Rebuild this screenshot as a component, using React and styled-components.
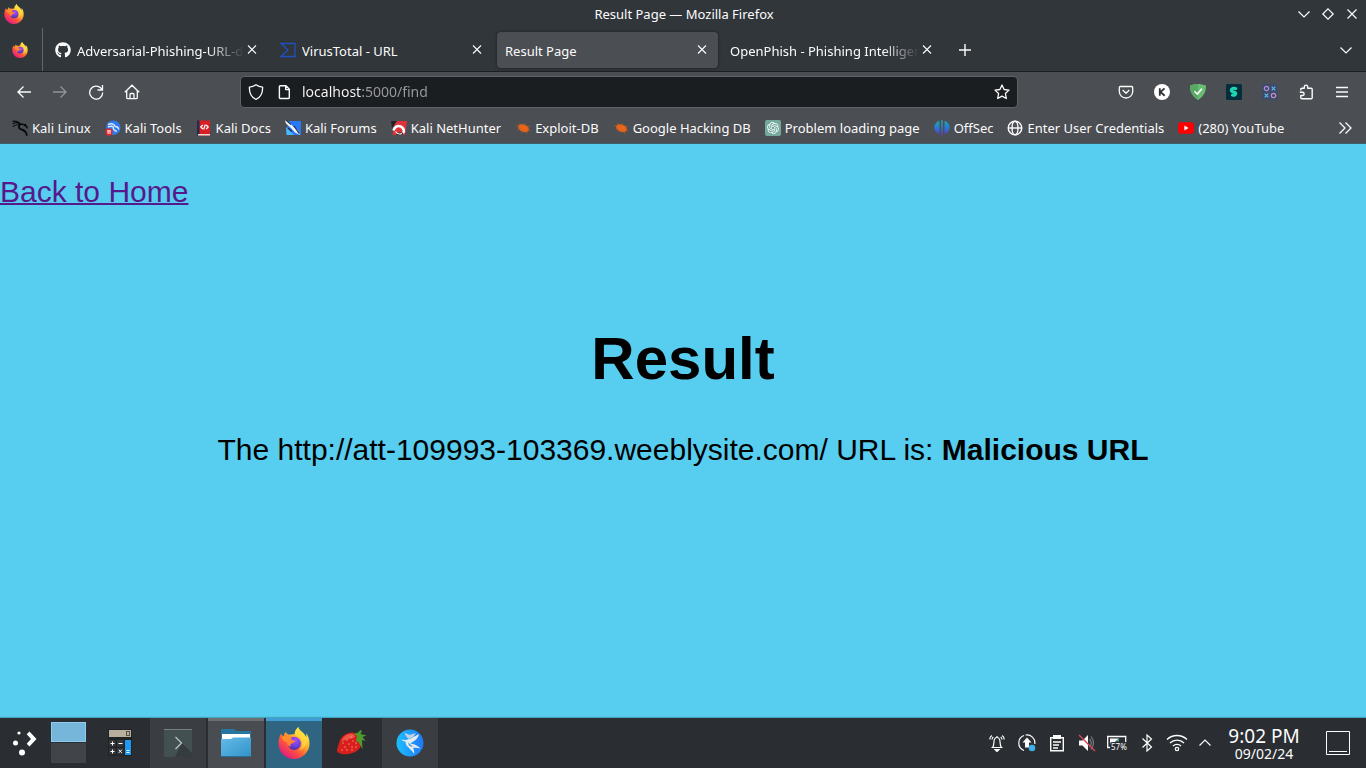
import React, { useId } from "react";
import styled, { createGlobalStyle } from "styled-components";
import { FaGithub } from "react-icons/fa";
import { SiOpenai } from "react-icons/si";

const GlobalStyle = createGlobalStyle`
  * { box-sizing: border-box; }
  body { margin: 0; font-family: "Noto Sans", "Open Sans", sans-serif; font-size: 13px; color: #fcfcfc; }
  button { font: inherit; color: inherit; background: none; border: 0; padding: 0; margin: 0; }
  svg { display: block; flex: none; }
`;

/* ---------- layout ---------- */

const Desktop = styled.div`
  min-height: 100vh;
  display: flex;
  flex-direction: column;
  background: #57ceef;
`;

const TitleBar = styled.header`
  display: flex;
  align-items: center;
  height: 28px;
  padding: 0 2px 0 4px;
  background: #31363b;
`;

const TitleSide = styled.div`
  flex: 1;
  display: flex;
  justify-content: ${(p) => (p.$end ? "flex-end" : "flex-start")};
`;

const WindowButton = styled.button`
  width: 24px;
  height: 28px;
  display: grid;
  place-items: center;
`;

const TabStrip = styled.nav`
  display: flex;
  height: 44px;
  padding-right: 2px;
  background: #31363b;
  border-bottom: 1px solid #1c1f22;
`;

const PinnedTab = styled.button`
  width: 43px;
  padding-right: 2px;
  display: grid;
  place-items: center;
  border-right: 1px solid #62666a;
`;

const Tabs = styled.div`
  flex: 1;
  display: flex;
  align-items: center;
  gap: 4px;
  padding-left: 4px;
`;

const Tab = styled.div`
  flex: 0 1 221px;
  min-width: 0;
  height: 36px;
  display: flex;
  align-items: center;
  padding: 0 8px;
  border-radius: 4px;
  background: ${(p) => (p.$active ? "#4b4e53" : "transparent")};
  box-shadow: ${(p) => (p.$active ? "0 0 3px rgba(0, 0, 0, 0.5)" : "none")};
`;

const TabLabel = styled.button`
  flex: 1;
  min-width: 0;
  display: flex;
  align-items: center;
  gap: 6px;
`;

const TabText = styled.span`
  flex: 1;
  overflow: hidden;
  padding-top: 2px;
  text-align: left;
  white-space: nowrap;
  mask-image: ${(p) => (p.$fade ? "linear-gradient(to left, transparent, #000 36px)" : "none")};
`;

const TabClose = styled.button`
  width: 16px;
  height: 20px;
  display: grid;
  place-items: center;
`;

const StripButton = styled.button`
  width: 36px;
  height: 44px;
  display: grid;
  place-items: center;
`;

const Toolbar = styled.div`
  display: flex;
  align-items: center;
  height: 40px;
  padding: 0 6px;
  background: #4b4e53;
`;

const ToolButton = styled.button`
  width: 36px;
  height: 32px;
  display: grid;
  place-items: center;
  opacity: ${(p) => (p.disabled ? 0.4 : 1)};
  color: #fcfcfc;
`;

const Spring = styled.div`
  flex: 90;
`;

const AddressBar = styled.form`
  flex: 762;
  display: flex;
  align-items: center;
  height: 32px;
  padding: 0 7px;
  border: 1px solid #5e6266;
  border-radius: 4px;
  background: #1b1e20;
`;

const AddressInput = styled.input`
  flex: 1;
  min-width: 0;
  margin: 0 8px 0 10px;
  padding: 0;
  border: 0;
  outline: 0;
  font: 14px/24px "Noto Sans", sans-serif;
  background: linear-gradient(to right, #fcfcfc 60px, #9a9b9d 60px);
  background-clip: text;
  -webkit-text-fill-color: transparent;
`;

const AddressButton = styled.button`
  width: 16px;
  height: 24px;
  display: grid;
  place-items: center;
  & + & { margin-left: 12px; }
`;

const Bookmarks = styled.nav`
  display: flex;
  align-items: center;
  height: 32px;
  padding: 0 13px 0 12px;
  gap: 14px;
  background: #4b4e53;
  border-bottom: 1px solid #3d5f6b;
`;

const Bookmark = styled.a`
  display: flex;
  align-items: center;
  gap: 4px;
  color: #fcfcfc;
  text-decoration: none;
  white-space: nowrap;
`;

const MoreBookmarks = styled.button`
  margin-left: auto;
`;

const Page = styled.main`
  flex: 1;
  padding-top: 31px;
  font: 30px/34px "Liberation Sans", Arial, sans-serif;
  color: #000;
`;

const BackLink = styled.a`
  color: #551a8b;
  text-decoration-thickness: 2px;
`;

const Result = styled.section`
  padding-top: 116px;
  text-align: center;
`;

const ResultTitle = styled.h1`
  margin: 0 0 40px;
  font-size: 60px;
  line-height: 68px;
`;

const ResultText = styled.p`
  margin: 0;
`;

const TaskBar = styled.footer`
  display: flex;
  height: 50px;
  background: #2a2e32;
  box-shadow: 0 -1px 1px rgba(0, 0, 0, 0.2);
`;

const Launcher = styled.button`
  width: 48px;
  display: grid;
  place-items: center;
`;

const Pager = styled.div`
  display: flex;
  flex-direction: column;
  gap: 1px;
  width: 41px;
  padding: 4px 3px;
`;

const PagerDesk = styled.button`
  height: 20px;
  background: ${(p) => (p.$active ? "#76b6da" : "#414448")};
  border: ${(p) => (p.$active ? "1px solid #8ecdf0" : "0")};
`;

const Tasks = styled.div`
  display: flex;
  padding-left: 1px;
`;

const taskLooks = {
  plain: ["transparent", "transparent"],
  pinned: ["#3a3d41", "#3a3d41"],
  open: ["#494c50", "#6c6f72"],
  active: ["#306582", "#3d9fd6"],
};

const Task = styled.button`
  width: ${(p) => (p.$look === "plain" ? 60 : 56)}px;
  display: grid;
  place-items: center;
  background: ${(p) => taskLooks[p.$look][0]};
  box-shadow: inset 0 3px ${(p) => taskLooks[p.$look][1]};
  margin-right: ${(p) => (p.$gap ? 2 : 0)}px;
`;

const Tray = styled.div`
  display: flex;
  margin-left: auto;
`;

const TrayButton = styled.button`
  width: 30px;
  display: grid;
  place-items: center;
`;

const TrayToggle = styled(TrayButton)`
  width: 26px;
`;

const Clock = styled.button`
  width: 92px;
  padding-top: 2px;
  display: flex;
  flex-direction: column;
  align-items: center;
  justify-content: center;
`;

const Time = styled.time`
  font-size: 19px;
  line-height: 20px;
`;

const DateText = styled.time`
  font-size: 14px;
  line-height: 16px;
`;

const ShowDesktop = styled.button`
  width: 56px;
  display: grid;
  place-items: center;
`;

/* ---------- icons ---------- */

const Line = ({ size = 16, box = 16, w = 1, children }) => (
  <svg width={size} height={size} viewBox={`0 0 ${box} ${box}`} fill="none" stroke="currentColor" strokeWidth={w}>
    {children}
  </svg>
);

const Cross = () => <Line w={1.1}><path d="M4 3.500l8 8M12 3.500l-8 8" /></Line>;
const Chevron = ({ up }) => <Line w={1.2}><path d={up ? "M2.500 10.500L8 5l5.500 5.500" : "M2.500 5.500L8 11l5.500-5.500"} /></Line>;

const Firefox = ({ size }) => {
  const id = useId().replace(/[^a-zA-Z0-9]/g, "");
  return (
    <svg width={size} height={size} viewBox="0 0 32 33">
      <defs>
        <linearGradient id={`${id}a`} x1=".85" y1=".1" x2=".2" y2=".95">
          <stop offset="0" stopColor="#fff44f" />
          <stop offset=".35" stopColor="#ffb02e" />
          <stop offset=".62" stopColor="#ff5a36" />
          <stop offset="1" stopColor="#e31587" />
        </linearGradient>
        <radialGradient id={`${id}b`} cx=".6" cy=".25" r=".8">
          <stop offset="0" stopColor="#a84dfa" />
          <stop offset=".5" stopColor="#7542e5" />
          <stop offset="1" stopColor="#4b2aa3" />
        </radialGradient>
        <linearGradient id={`${id}c`} x1="0" y1="0" x2="1" y2="1">
          <stop offset="0" stopColor="#ff9a26" />
          <stop offset="1" stopColor="#ff7139" />
        </linearGradient>
      </defs>
      <path d="M20.500 0c-2.800 2.500-4 5-3.800 7.300l-6 .7C9.200 7.300 8 6.300 7.300 5.200 6 6.300 5.600 8 5.500 9.300 4.200 9 3 8.200 2.500 7 .9 9.800 0 13.500 0 17 0 25.700 7.200 33 16 33s16-7.300 16-16c0-4.500-1.600-8.500-3.600-10.800.5 1.700.5 3 .2 4.300C26.500 5 21.500 4.500 20.500 0z" fill={`url(#${id}a)`} />
      <circle cx="16.300" cy="16.800" r="6.800" fill={`url(#${id}b)`} />
      <path d="M3.500 11c2-1.500 4.600-1.700 6.500-.8 1.500-1 3.400-1.200 5-.9-1.400.8-2.100 1.900-2 3.100.6 1.200 2.300 1.600 4.400 1.800-.2 1.700-2.200 2.500-4.300 3.100-1.200.7-1 2.300-.1 3.400-3.200-.5-4.600-2.900-4.100-5.200-2 .2-3.900-1.600-5.400-4.500z" fill={`url(#${id}c)`} />
      <path d="M20.500 0c-2.800 2.500-4 5.500-3.500 8.500 4.500.5 7.500 4 7.500 8.500 0 3-1.500 5.600-4 7.200 5-.8 8.500-5 8.500-10 0-6-7.500-8-8.500-14.200z" fill="#ffdf3d" opacity=".6" />
    </svg>
  );
};

const VirusTotal = () => (
  <Line w={1.3}><path d="M1 1.500h14v13H1l7-6.500z" stroke="#1f4fc0" /></Line>
);

const Shield = () => <Line w={1.3}><path d="M8 .8c2.200 1.700 4.300 2.200 6.600 2.300.2 5.700-1.400 9.900-6.600 12.200C2.800 13 1.200 8.800 1.400 3.100 3.700 3 5.800 2.500 8 .8z" strokeLinejoin="round" /></Line>;
const PageIcon = () => <Line w={1.4}><path d="M4.300 1.700H10l3.300 3.500v8.600q0 .7-.7.7H4.300q-.9 0-.9-.8V2.500q0-.8.9-.8zM9.700 2v3.600h3.500" strokeLinejoin="round" /></Line>;
const Star = () => <Line w={1.3}><path d="M8 1l2.100 4.500 4.900.6-3.600 3.400.9 5L8 12.100l-4.300 2.400.9-5L1 6.100l4.900-.6z" strokeLinejoin="round" /></Line>;
const Back = () => <Line w={1.3}><path d="M15 8H1.500M7.500 2.500L2 8l5.500 5.500" /></Line>;
const Forward = () => <Line w={1.3}><path d="M1 8h13.500M8.500 2.500L14 8l-5.500 5.500" /></Line>;
const Reload = () => <Line w={1.3}><path d="M14.700 8.500A6.500 6.500 0 1 1 12.800 4L14.200 5.500M14.500 1v5h-5" /></Line>;
const Home = () => <Line w={1.3}><path d="M.8 8.200L8 1.200l7.200 7M2.700 6.700v7q0 1 1 1h8.600q1 0 1-1v-7M6 14.500v-4q0-1 1-1h2q1 0 1 1v4" /></Line>;
const Pocket = () => <Line w={1.3}><path d="M2.300 2.500h11.400q1 0 1 1v4a6.700 6.500 0 0 1-13.400 0v-4q0-1 1-1zM4.700 6L8 9.200 11.300 6" strokeLinejoin="round" /></Line>;
const Puzzle = () => <Line w={1.4}><path d="M2.800 6.500V5.200q0-1 1-1h2.500V3a1.700 1.900 0 0 1 3.400 0v1.200h3.500q1 0 1 1v8.500q0 1-1 1H3.800q-1 0-1-1v-2.200h1.700a1.600 1.600 0 0 0 0-3.200H1.800" strokeLinejoin="round" /></Line>;
const Menu = () => <Line w={1.3}><path d="M2 3.500h12M2 8h12M2 12.500h12" /></Line>;

const KBadge = () => (
  <svg width="16" height="16" viewBox="0 0 16 16">
    <circle cx="8" cy="8" r="8" fill="#fff" />
    <path d="M5.800 4.300v7.400M10.500 4.300L6.500 8l4.200 3.700" stroke="#303236" strokeWidth="1.800" fill="none" />
  </svg>
);
const AdGuard = () => (
  <svg width="16" height="16" viewBox="0 0 16 16">
    <path d="M8 0c2.500 0 5.600.5 8 1.600 0 3.800-.5 9.900-8 14.400C.5 11.500 0 5.400 0 1.600 2.400.5 5.500 0 8 0z" fill="#68bc71" />
    <path d="M8 0C5.500 0 2.400.5 0 1.600 0 5.400.5 11.500 8 16z" fill="#5aa867" />
    <path d="M4.500 7.300l2.800 2.800 4.600-5.300" stroke="#fff" strokeWidth="1.500" fill="none" />
  </svg>
);
const Surf = () => (
  <svg width="16" height="16" viewBox="0 0 16 16">
    <rect width="16" height="16" rx="1.500" fill="#062d3b" />
    <path d="M9.800 4.600C7.500 3.800 5.300 4.500 5.300 6.200c0 2.200 4.500 1.300 4.500 3.400 0 1.400-1.800 2-3.300 1.500" stroke="#1ed6b0" strokeWidth="3" strokeLinecap="round" fill="none" />
  </svg>
);
const OXGrid = () => (
  <svg width="16" height="16" viewBox="0 0 16 16" fill="none" strokeWidth="1.200">
    <rect width="16" height="16" rx="1" fill="#3d4b66" />
    <circle cx="4.500" cy="4.500" r="2.200" stroke="#b58be0" />
    <circle cx="11.500" cy="11.500" r="2.200" stroke="#c78bd0" />
    <path d="M9.700 2.700l3.600 3.600m0-3.600L9.700 6.300M2.700 9.700l3.600 3.600m0-3.600l-3.600 3.600" stroke="#5cb8ee" />
  </svg>
);

const KaliLinux = () => (
  <svg width="16" height="16" viewBox="0 0 16 16" fill="none" stroke="#08090a" strokeLinecap="round">
    <path d="M.8 1.200C4 .8 6.500 1.500 8.500 3.800M.8 3.500c3-1.200 5.500-.8 7.500.8M1.200 6.300c2.200-1.600 4.600-1.800 6.800-1.200" strokeWidth="1.100" />
    <path d="M8 4.200C6.200 6.500 6.800 8.700 9.500 9.500c3 .7 4.700 2 5.300 5.500" strokeWidth="1.800" />
    <path d="M8.500 4.300c2.500-.3 4.500.3 5.500 1.500l1.200 2M12.500 5.500l1-1" strokeWidth="1.500" />
  </svg>
);
const KaliTools = () => (
  <svg width="16" height="16" viewBox="0 0 16 16">
    <circle cx="8.300" cy="7.700" r="7.200" fill="#2f7cf0" />
    <path d="M3 4.500C6 3.300 9 4 10.500 6.500c1.800.2 3 1.300 3.300 3M3 7c2-1 4-1 5.500 0-.8 2 .5 3.300 3.300 4.500" stroke="#dbe9fb" strokeWidth="1.400" fill="none" />
    <circle cx="4" cy="12" r="3.700" fill="#d92b2f" />
    <path d="M2 10.800h4M3.200 11v3M5 11v3" stroke="#fff" strokeWidth=".9" />
  </svg>
);
const KaliDocs = () => (
  <svg width="16" height="16" viewBox="0 0 16 16">
    <path d="M2 .5h12v15H2z" fill="#d81f26" />
    <path d="M1 .5h2.500v15H1z" fill="#252b4a" />
    <path d="M2 14h12v1.500H2z" fill="#ecd6d8" />
    <path d="M6.800 5L4.800 7l2 2M10.200 5l2 2-2 2M9.300 4.500l-1.600 5" stroke="#fff" strokeWidth="1.200" fill="none" />
  </svg>
);
const KaliForums = () => (
  <svg width="16" height="16" viewBox="0 0 16 16">
    <path d="M3 1h13v14H1.500z" fill="#2a78f5" />
    <path d="M1 7l8 8H1.500z" fill="#49b7ff" />
    <path d="M0 .5L4 2l4.500 5 4 3L15 15l-5-2.500L6 8 1 3.500z" fill="#f3f6fa" />
    <path d="M1.500.5L6 4.500M9 6l5 7.500M3 8l4 3.500" stroke="#23303d" strokeWidth="1.100" />
  </svg>
);
const NetHunter = () => (
  <svg width="16" height="16" viewBox="0 0 16 16">
    <path d="M4 1h12l-2 14H1.500z" fill="#e0333a" />
    <path d="M0 1h6L1 8z" fill="#20242a" />
    <path d="M6.500 12.500h6l-1 2.500H5z" fill="#20242a" />
    <path d="M2.500 10.500C3.500 6.500 7 5 10 6.700c3 1.800 3.800 4.300 2 6.300" stroke="#fff" strokeWidth="2.600" fill="none" />
    <path d="M4.500 11.500c1.500 2.200 4 3 6.500 2" stroke="#fff" strokeWidth="1.200" fill="none" />
  </svg>
);
const Bug = () => (
  <svg width="16" height="16" viewBox="0 0 16 16">
    <ellipse cx="8.500" cy="8.200" rx="5.600" ry="3.600" transform="rotate(22 8.500 8.200)" fill="#e8651a" />
    <path d="M1 5.500l4 1M4 3l3 3M9 3l1 3M2.500 9.500L6 9M6 12.500L8 10M12 7l3-1M12.500 9.500l3 1.500M10.500 10l1.500 3.500" stroke="#b85c26" strokeWidth=".7" />
  </svg>
);
const AiBadge = styled.span`
  width: 16px;
  height: 16px;
  display: grid;
  place-items: center;
  border-radius: 2px;
  background: #74aa9c;
`;
const OffSec = () => (
  <svg width="16" height="16" viewBox="0 0 16 16">
    <defs>
      <linearGradient id="offsec" x1="0" y1="0" x2="0" y2="1">
        <stop offset="0" stopColor="#25a5a8" />
        <stop offset=".5" stopColor="#2878d8" />
        <stop offset="1" stopColor="#6534a5" />
      </linearGradient>
    </defs>
    <path d="M5.500.8v13.500C-1.500 12-1.500 3 5.500.8zM7.200.3h1.600v15.400H7.200zM10.500.8c7 2.200 7 11.200 0 13.500z" fill="url(#offsec)" />
  </svg>
);
const Globe = () => <Line w={1.4}><circle cx="8" cy="8" r="6.800" /><ellipse cx="8" cy="8" rx="3" ry="6.800" /><path d="M1.500 8h13" /></Line>;
const YouTube = () => (
  <svg width="16" height="16" viewBox="0 0 16 16">
    <rect y="2.300" width="16" height="11.400" rx="3" fill="#f00" />
    <path d="M6.400 5.600v4.800L10.500 8z" fill="#fff" />
  </svg>
);

const Kickoff = () => (
  <svg width="26" height="26" viewBox="1 0 26 26" fill="#fff">
    <circle cx="9" cy="3" r="1.600" /><circle cx="5.500" cy="13" r="2.500" /><circle cx="12" cy="22.500" r="3" />
    <path d="M19.500 1.500l7 7.500-7 7.500-2.800-2.700L21 9l-4.300-4.800z" />
  </svg>
);
const Calculator = () => (
  <svg width="24" height="28" viewBox="0 0 24 28">
    <rect width="24" height="27" fill="#202326" />
    <rect x="1" y="1" width="22" height="7" fill="#b8b09c" />
    <rect x="18.500" y="2.500" width="3" height="4" fill="none" stroke="#55524a" />
    <path d="M1 11h6.500v6.500H1zM9 11h6.500v6.500H9zM1 19h6.500v6.500H1zM9 19h6.500v6.500H9z" fill="#34373a" />
    <path d="M17 11h6v15h-6z" fill="#1d99f3" />
    <path d="M2.500 14.500h4M4.500 12.500v4M10.500 14.500h4M2.500 22.500h4M4.500 20.500v4M10.800 20.800l3 3m0-3l-3 3M18.500 21.500h3M18.500 23.500h3" stroke="#fff" />
  </svg>
);
const Terminal = () => (
  <svg width="28" height="28" viewBox="0 0 28 28">
    <rect width="28" height="28" fill="#435052" />
    <path d="M0 .5h28" stroke="#758080" />
    <path d="M18 14l10 10v4H11z" fill="#343c40" />
    <path d="M11.500 8l6 6-6 6" stroke="#b8c0c2" strokeWidth="1.300" fill="none" />
  </svg>
);
const Folder = () => (
  <svg width="30" height="28" viewBox="0 0 30 28">
    <defs>
      <linearGradient id="folder" x1="0" y1="0" x2="1" y2="1">
        <stop offset="0" stopColor="#64bce9" /><stop offset="1" stopColor="#3192c8" />
      </linearGradient>
    </defs>
    <path d="M0 0h13l2 2h15v12H0z" fill="#2577a0" />
    <path d="M1 5h28v8H1z" fill="#fff" />
    <path d="M0 10h10l2-1.500h18V28H0z" fill="url(#folder)" />
    <path d="M0 27.500h30" stroke="#276f95" />
  </svg>
);
const Strawberry = () => (
  <svg width="30" height="26" viewBox="0 0 30 26">
    <path d="M20 4C14 0 5 4 2.500 11.500c-2 7-3.500 9-1.500 11 5 3.500 17 1.500 21.500-4 3.500-4.500 2-11-2.500-14.500z" fill="#d81f1c" />
    <path d="M17 4.500C11 2 5.500 7 4.500 12c5-4 8.500-2 13.500-5z" fill="#ee5545" />
    <g fill="#f7a08c">
      {[[6, 13], [10, 10], [14, 7], [8, 17], [12, 14], [16, 11], [5, 20], [10, 20], [15, 17], [19, 13], [15, 20], [19, 17]].map(([x, y]) => (
        <circle key={`${x}-${y}`} cx={x} cy={y} r=".7" />
      ))}
    </g>
    <path d="M17 4l4-1.500L23.500 0l1.500 1-1.500 3 6 1.500-4 1.500 3 4-3.500-1 .5 9-4-7-2.500-1 1-5z" fill="#4f9b2c" />
  </svg>
);
const KaliDisc = () => (
  <svg width="28" height="28" viewBox="0 0 28 28">
    <defs>
      <linearGradient id="disc" x1="0" y1="0" x2="1" y2="0">
        <stop offset="0" stopColor="#1ac0ff" /><stop offset="1" stopColor="#2277f2" />
      </linearGradient>
    </defs>
    <circle cx="14" cy="14" r="13.500" fill="url(#disc)" />
    <path d="M8.500 3.500c2 1.500 3.500 2 5.500 2.200L20 4l-3 4-4.500 2C10.500 8 9 6 8.500 3.500z" fill="#c4d2df" />
    <path d="M5 10.500c4 .8 7.500.5 11-1.700L23 5c-.8 3.500-3 6.300-6.500 8l-2.500 1.500c4 .2 7.500 2 10.500 5-3-.8-5-1-7.500-.8 1 2 1.300 4 1.200 6.300C15.500 20.500 12 19 10 15.500c-.5-1-.5-1.800 0-2.700C8 12.500 6.300 11.800 5 10.500z" fill="#e4ebf1" />
    <path d="M12.500 13.500c1.500 2 3 3 5 3.800l-3 .2c-1.700-.8-2.500-2.200-2-4z" fill="#5b93c9" />
  </svg>
);

const Bell = () => <Line size={18} box={18} w={1.2}><path d="M3.500 13.500h11M4.700 13.300C6 11.500 5.700 9.500 6 7.500 6.200 5 7.400 3.500 9 3.500s2.800 1.500 3 4c.3 2 0 4 1.300 5.800M9 3.500V2M3.800 1.500c-1.300 1-2 2.500-2 4M5.300 2.800c-.8.8-1.200 1.700-1.300 2.700M14.200 1.500c1.300 1 2 2.500 2 4M12.700 2.800c.8.8 1.200 1.700 1.300 2.700" /><path d="M7 15.500h4l-2 2z" fill="currentColor" /></Line>;
const Update = () => <Line size={18} box={18} w={1.2}><path d="M6 16.500A8 8 0 0 1 6 1.500M7.500 1a8 8 0 0 1 9.300 9" /><path d="M9 3.500l4.500 5H11v5H7v-5H4.500z" fill="currentColor" stroke="none" /><circle cx="14" cy="14" r="3.300" fill="#3daee9" stroke="none" /></Line>;
const Clipboard = () => <Line size={18} box={18} w={1.4}><path d="M2.700 3.700h12.600v13H2.700zM5 8h8M5 11h6M5 14h5" /><path d="M5 1h8v4H5z" fill="currentColor" stroke="none" /></Line>;
const Muted = () => <Line size={18} box={18} w={1.2}><path d="M1 6.500h3.500L10 1v16l-5.500-5.500H1z" fill="currentColor" stroke="none" /><path d="M11.500 5q3.500 4 0 8M13 2.500q5 6.500 0 13" stroke="#777b7e" /><path d="M1 1l16 16" stroke="#da4453" strokeWidth="1.500" /></Line>;
const BatteryBox = styled.span`
  position: relative;
  display: block;
  width: 20px;
  height: 18px;
`;
const BatteryLevel = styled.span`
  position: absolute;
  left: 3px;
  top: 8px;
  padding: 0 1px;
  border-radius: 2px;
  font-size: 8px;
  line-height: 10px;
  background: #2a2e32;
`;
const Battery = () => (
  <BatteryBox>
    <svg width="20" height="18" viewBox="0 0 20 18" fill="none">
      <path d="M.7 13.500V2.500h18v11z" stroke="#fcfcfc" strokeWidth="1.300" />
      <path d="M3 4.500h9L3 12z" fill="#fcfcfc" /><path d="M9 7.500l3-3v3z" fill="#2fae8f" />
    </svg>
    <BatteryLevel>57%</BatteryLevel>
  </BatteryBox>
);
const Bluetooth = () => <Line size={18} box={18} w={1.2}><path d="M4.500 4.500l9 8.500L9 17V1l4.500 4-9 8.500" /></Line>;
const Wifi = () => <Line size={22} box={22} w={1.3}><path d="M1 7.500a14.500 14.500 0 0 1 20 0M4 11a10 10 0 0 1 14 0M7 14a5.700 5.700 0 0 1 8 0" /><circle cx="11" cy="17" r="1.700" /></Line>;

/* ---------- content ---------- */

const tabs = [
  { text: "Adversarial-Phishing-URL-detection", icon: <FaGithub size={16} />, fade: true },
  { text: "VirusTotal - URL", icon: <VirusTotal /> },
  { text: "Result Page", active: true },
  { text: "OpenPhish - Phishing Intelligence", fade: true },
];

const bookmarks = [
  ["Kali Linux", <KaliLinux />],
  ["Kali Tools", <KaliTools />],
  ["Kali Docs", <KaliDocs />],
  ["Kali Forums", <KaliForums />],
  ["Kali NetHunter", <NetHunter />],
  ["Exploit-DB", <Bug />],
  ["Google Hacking DB", <Bug />],
  ["Problem loading page", <AiBadge><SiOpenai size={12} /></AiBadge>],
  ["OffSec", <OffSec />],
  ["Enter User Credentials", <Globe />],
  ["(280) YouTube", <YouTube />],
];

const extensions = [
  ["Pocket", <Pocket />],
  ["Account", <KBadge />],
  ["AdGuard", <AdGuard />],
  ["Surfshark", <Surf />],
  ["Noughts and crosses", <OXGrid />],
  ["Extensions", <Puzzle />],
  ["Menu", <Menu />],
];

const tasks = [
  ["Calculator", "plain", <Calculator />],
  ["Terminal", "pinned", <Terminal />, true],
  ["Files", "open", <Folder />, true],
  ["Firefox", "active", <Firefox size={32} />],
  ["Strawberry", "plain", <Strawberry />],
  ["Kali", "pinned", <KaliDisc />],
];

const tray = [
  ["Notifications", <Bell />],
  ["Updates", <Update />],
  ["Clipboard", <Clipboard />],
  ["Volume", <Muted />],
  ["Battery", <Battery />],
  ["Bluetooth", <Bluetooth />],
  ["Network", <Wifi />],
];

export default function App() {
  return (
    <Desktop>
      <GlobalStyle />
      <TitleBar>
        <TitleSide><Firefox size={20} /></TitleSide>
        <span>Result Page — Mozilla Firefox</span>
        <TitleSide $end>
          <WindowButton aria-label="Minimize"><Chevron /></WindowButton>
          <WindowButton aria-label="Maximize"><Line w={1.2}><path d="M8 2.800L13.200 8 8 13.200 2.800 8z" /></Line></WindowButton>
          <WindowButton aria-label="Close"><Line w={1.2}><path d="M3.500 3.500l9 9M12.500 3.500l-9 9" /></Line></WindowButton>
        </TitleSide>
      </TitleBar>

      <TabStrip>
        <PinnedTab aria-label="Firefox View"><Firefox size={16} /></PinnedTab>
        <Tabs>
          {tabs.map((t) => (
            <Tab key={t.text} $active={t.active}>
              <TabLabel>
                {t.icon}
                <TabText $fade={t.fade}>{t.text}</TabText>
              </TabLabel>
              <TabClose aria-label={`Close ${t.text}`}><Cross /></TabClose>
            </Tab>
          ))}
          <StripButton aria-label="New tab"><Line w={1.4}><path d="M2 8h12M8 2v12" /></Line></StripButton>
        </Tabs>
        <StripButton aria-label="List all tabs"><Chevron /></StripButton>
      </TabStrip>

      <Toolbar>
        <ToolButton aria-label="Back"><Back /></ToolButton>
        <ToolButton aria-label="Forward" disabled><Forward /></ToolButton>
        <ToolButton aria-label="Reload"><Reload /></ToolButton>
        <ToolButton aria-label="Home"><Home /></ToolButton>
        <Spring />
        <AddressBar onSubmit={(e) => e.preventDefault()}>
          <AddressButton type="button" aria-label="Tracking protection"><Shield /></AddressButton>
          <AddressButton type="button" aria-label="Site information"><PageIcon /></AddressButton>
          <AddressInput aria-label="Address" defaultValue="localhost:5000/find" />
          <AddressButton type="button" aria-label="Bookmark this page"><Star /></AddressButton>
        </AddressBar>
        <Spring />
        {extensions.map(([name, icon]) => (
          <ToolButton key={name} aria-label={name}>{icon}</ToolButton>
        ))}
      </Toolbar>

      <Bookmarks>
        {bookmarks.map(([name, icon]) => (
          <Bookmark key={name} href="#">{icon}{name}</Bookmark>
        ))}
        <MoreBookmarks aria-label="More bookmarks">
          <Line w={1.3}><path d="M2.500 2.500L8 8l-5.500 5.500M8.500 2.500L14 8l-5.500 5.500" /></Line>
        </MoreBookmarks>
      </Bookmarks>

      <Page>
        <BackLink href="#">Back to Home</BackLink>
        <Result>
          <ResultTitle>Result</ResultTitle>
          <ResultText>
            The http://att-109993-103369.weeblysite.com/ URL is: <strong>Malicious URL</strong>
          </ResultText>
        </Result>
      </Page>

      <TaskBar>
        <Launcher aria-label="Application launcher"><Kickoff /></Launcher>
        <Pager>
          <PagerDesk $active aria-label="Desktop 1" />
          <PagerDesk aria-label="Desktop 2" />
        </Pager>
        <Tasks>
          {tasks.map(([name, look, icon, gap]) => (
            <Task key={name} $look={look} $gap={gap} aria-label={name}>{icon}</Task>
          ))}
        </Tasks>
        <Tray>
          {tray.map(([name, icon]) => (
            <TrayButton key={name} aria-label={name}>{icon}</TrayButton>
          ))}
          <TrayToggle aria-label="Show hidden icons"><Chevron up /></TrayToggle>
          <Clock>
            <Time>9:02 PM</Time>
            <DateText>09/02/24</DateText>
          </Clock>
          <ShowDesktop aria-label="Show desktop">
            <Line size={24} box={24}><path d="M.5.5h23v23H.5zM3 20.500h18" /></Line>
          </ShowDesktop>
        </Tray>
      </TaskBar>
    </Desktop>
  );
}
